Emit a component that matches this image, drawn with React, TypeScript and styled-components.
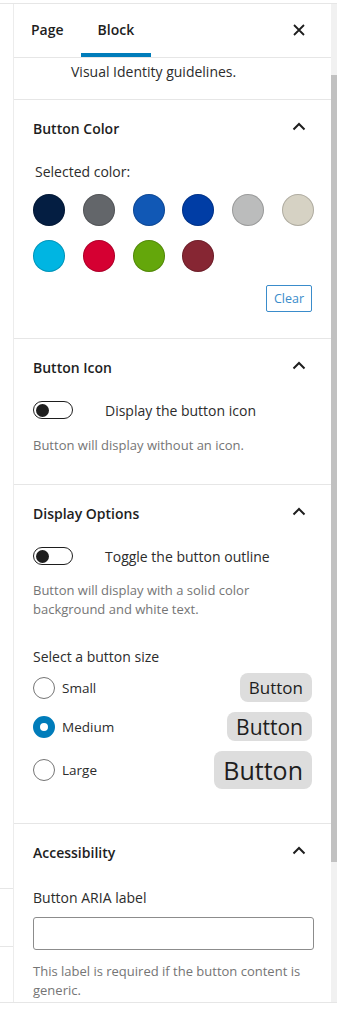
import React from "react";
import styled, { createGlobalStyle } from "styled-components";

const Global = createGlobalStyle`
  html, body { margin: 0; padding: 0; background: #fff; }
  body { font-family: "Segoe UI", "Open Sans", "Noto Sans", sans-serif; color: #1e1e1e; }
  * { box-sizing: border-box; }
`;

const Frame = styled.div`
  margin-top: 3px;
  height: 1000px;
  border-top: 1px solid #e6e6e6;
  border-bottom: 1px solid #e6e6e6;
  display: flex;
  width: 337px;
  overflow: hidden;
`;

const Gutter = styled.div`
  width: 14px;
  flex-shrink: 0;
  border-right: 1px solid #ececec;
  display: flex;
  flex-direction: column;
  padding-top: 884px;
`;

const GutterRow = styled.div`
  height: 58px;
  flex-shrink: 0;
  border-top: 1px solid #e6e6e6;
`;

const Panel = styled.div`
  flex: 1;
  display: block;
  overflow: hidden;
`;

const Scrollbar = styled.div`
  width: 6px;
  flex-shrink: 0;
  background: #f1f1f1;
  display: flex;
  flex-direction: column;
`;

const Thumb = styled.div`
  margin-top: 71px;
  height: 787px;
  flex-shrink: 0;
  background: #c1c1c1;
`;

const Header = styled.div`
  height: 54px;
  border-bottom: 1px solid #e6e6e6;
  display: flex;
  align-items: stretch;
`;

const Tab = styled.div<{ $active?: boolean }>`
  display: flex;
  align-items: center;
  justify-content: center;
  padding: 0 17px 2px;
  font-size: 14px;
  font-weight: 600;
  color: #1e1e1e;
  box-shadow: ${(p) => (p.$active ? "inset 0 -4px 0 #007cba" : "none")};
`;

const CloseBtn = styled.div`
  margin-left: auto;
  width: 24px;
  display: flex;
  align-items: center;
  justify-content: center;
  margin-right: 20px;
  padding-bottom: 2px;
`;

const Desc = styled.div`
  height: 42px;
  border-bottom: 1px solid #e6e6e6;
  padding: 4px 0 0 57px;
  font-size: 14px;
  line-height: 20px;
  color: #2c2c2c;
`;

const Section = styled.section<{ $pb: number }>`
  border-bottom: 1px solid #e6e6e6;
  padding: 0 17px ${(p) => p.$pb}px 19px;
  display: flex;
  flex-direction: column;
`;

const TitleRow = styled.div`
  height: 56px;
  display: flex;
  align-items: center;
  justify-content: space-between;
`;

const Title = styled.h2`
  margin: 0;
  font-size: 14px;
  font-weight: 600;
  color: #1e1e1e;
`;

const IconBox = styled.span`
  width: 24px;
  height: 24px;
  display: flex;
  align-items: center;
  justify-content: center;
  margin-right: 3px;
  margin-top: -3px;
`;

const Label = styled.div<{ $mt: number; $indent?: number }>`
  margin-top: ${(p) => p.$mt}px;
  padding-left: ${(p) => p.$indent ?? 0}px;
  font-size: 14px;
  line-height: 20px;
  color: #2c2c2c;
`;

const Swatches = styled.div`
  margin-top: 12px;
  display: grid;
  grid-template-columns: repeat(6, 32px);
  justify-content: space-between;
  row-gap: 14px;
  width: 281px;
`;

const Swatch = styled.span<{ $c: string }>`
  width: 32px;
  height: 32px;
  border-radius: 50%;
  background: ${(p) => p.$c};
  box-shadow: inset 0 0 0 1px rgba(0, 0, 0, 0.18);
`;

const ClearRow = styled.div`
  margin-top: 13px;
  display: flex;
  justify-content: flex-end;
  padding-right: 2px;
`;

const ClearBtn = styled.button`
  height: 27px;
  width: 46px;
  border: 1px solid #3a8ccb;
  border-radius: 2px;
  background: #fff;
  color: #3a8ccb;
  font-family: inherit;
  font-size: 12.5px;
  padding: 0;
`;

const ToggleRow = styled.div`
  margin-top: 5px;
  height: 20px;
  display: flex;
  align-items: center;
  gap: 32px;
`;

const Track = styled.span`
  width: 40px;
  height: 18px;
  border: 1px solid #1e1e1e;
  border-radius: 9px;
  display: flex;
  align-items: center;
  padding-left: 2px;
`;

const Knob = styled.span`
  width: 13px;
  height: 13px;
  border-radius: 50%;
  background: #1e1e1e;
`;

const ToggleLabel = styled.span`
  font-size: 14px;
  color: #2c2c2c;
`;

const Help = styled.p<{ $mt: number }>`
  margin: ${(p) => p.$mt}px 0 0;
  font-size: 13px;
  line-height: 19px;
  color: #757575;
`;

const RadioList = styled.div`
  margin-top: 6px;
  display: flex;
  flex-direction: column;
  gap: 10px;
`;

const RadioRow = styled.div<{ $h: number }>`
  height: ${(p) => p.$h}px;
  display: flex;
  align-items: center;
  gap: 7px;
`;

const Radio = styled.span<{ $checked?: boolean }>`
  width: 22px;
  height: 22px;
  border-radius: 50%;
  border: ${(p) => (p.$checked ? "7px solid #007cba" : "1px solid #757575")};
  background: #fff;
`;

const RadioLabel = styled.span`
  font-size: 13.5px;
  color: #2c2c2c;
`;

const Preview = styled.span<{ $fs: number; $h: number }>`
  margin-left: auto;
  margin-right: 2px;
  height: ${(p) => p.$h}px;
  display: flex;
  align-items: center;
  padding: 0 9px;
  border-radius: 8px;
  background: #dddddd;
  font-size: ${(p) => p.$fs}px;
  color: #1e1e1e;
`;

const Input = styled.input`
  margin-top: 9px;
  width: 281px;
  height: 33px;
  border: 1px solid #8c8c8c;
  border-radius: 3px;
`;

const Chevron = () => (
  <IconBox>
    <svg width="14" height="9" viewBox="0 0 14 9" fill="none">
      <path d="M1.5 7.5 L7 2 L12.5 7.5" stroke="#1e1e1e" strokeWidth="2" />
    </svg>
  </IconBox>
);

const colors = [
  "#041e42",
  "#63666a",
  "#1158b5",
  "#003da5",
  "#bbbcbc",
  "#d6d2c4",
  "#00b5e2",
  "#d50032",
  "#64a70b",
  "#862633",
];

export default function App() {
  return (
    <>
      <Global />
      <Frame>
        <Gutter>
          <GutterRow />
          <GutterRow />
        </Gutter>
        <Panel>
          <Header>
            <Tab>Page</Tab>
            <Tab $active>Block</Tab>
            <CloseBtn>
              <svg width="14" height="14" viewBox="0 0 14 14">
                <path d="M2 2 L12 12 M12 2 L2 12" stroke="#1e1e1e" strokeWidth="1.8" />
              </svg>
            </CloseBtn>
          </Header>
          <Desc>Visual Identity guidelines.</Desc>

          <Section $pb={26}>
            <TitleRow>
              <Title>Button Color</Title>
              <Chevron />
            </TitleRow>
            <Label $mt={6} $indent={2}>Selected color:</Label>
            <Swatches>
              {colors.map((c) => (
                <Swatch key={c} $c={c} />
              ))}
            </Swatches>
            <ClearRow>
              <ClearBtn>Clear</ClearBtn>
            </ClearRow>
          </Section>

          <Section $pb={29}>
            <TitleRow>
              <Title>Button Icon</Title>
              <Chevron />
            </TitleRow>
            <ToggleRow>
              <Track>
                <Knob />
              </Track>
              <ToggleLabel>Display the button icon</ToggleLabel>
            </ToggleRow>
            <Help $mt={16}>Button will display without an icon.</Help>
          </Section>

          <Section $pb={34}>
            <TitleRow>
              <Title>Display Options</Title>
              <Chevron />
            </TitleRow>
            <ToggleRow>
              <Track>
                <Knob />
              </Track>
              <ToggleLabel>Toggle the button outline</ToggleLabel>
            </ToggleRow>
            <Help $mt={15}>
              Button will display with a solid color background and white text.
            </Help>
            <Label $mt={28}>Select a button size</Label>
            <RadioList>
              <RadioRow $h={29}>
                <Radio />
                <RadioLabel>Small</RadioLabel>
                <Preview $fs={17} $h={29}>Button</Preview>
              </RadioRow>
              <RadioRow $h={29}>
                <Radio $checked />
                <RadioLabel>Medium</RadioLabel>
                <Preview $fs={21} $h={29}>Button</Preview>
              </RadioRow>
              <RadioRow $h={38}>
                <Radio />
                <RadioLabel>Large</RadioLabel>
                <Preview $fs={25} $h={38}>Button</Preview>
              </RadioRow>
            </RadioList>
          </Section>

          <Section $pb={20}>
            <TitleRow>
              <Title>Accessibility</Title>
              <Chevron />
            </TitleRow>
            <Label $mt={8}>Button ARIA label</Label>
            <Input />
            <Help $mt={12}>
              This label is required if the button content is generic.
            </Help>
          </Section>
        </Panel>
        <Scrollbar>
          <Thumb />
        </Scrollbar>
      </Frame>
    </>
  );
}
